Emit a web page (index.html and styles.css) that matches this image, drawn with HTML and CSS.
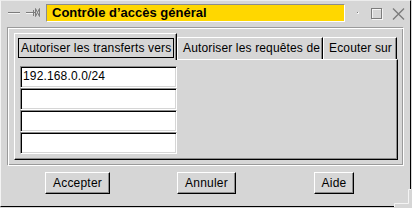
FILE: index.html
```html
<!DOCTYPE html>
<html lang="fr">
<head>
<meta charset="utf-8">
<title>Contrôle d’accès général</title>
<link rel="stylesheet" href="styles.css">
</head>
<body>
<div class="window">
  <div class="titlebar">
    <svg class="ticons-left" width="34" height="17" viewBox="0 0 34 17">
      <rect x="0" y="8" width="12" height="1" fill="#7c7c7c"/>
      <rect x="0" y="9" width="12" height="1" fill="#f4f4f4"/>
      <rect x="18" y="8" width="7" height="1" fill="#7c7c7c"/>
      <rect x="18" y="9" width="7" height="1" fill="#f4f4f4"/>
      <rect x="25" y="6" width="1" height="6" fill="#7c7c7c"/>
      <path d="M26 8.5 H27.5 M27.5 4.5 V12.5 M31.5 4.5 V12.5 M27.5 4.5 L29.5 8.5 L31.5 4.5 M27.5 12.5 L29.5 8.5 L31.5 12.5" fill="none" stroke="#7c7c7c" stroke-width="1"/>
    </svg>
    <div class="title">Contrôle d’accès général</div>
    <svg class="ticons-right" width="64" height="17" viewBox="0 0 64 17">
      <rect x="12" y="8" width="2" height="2" fill="#f4f4f4"/>
      <rect x="12" y="8" width="1" height="1" fill="#7c7c7c"/>
      <rect x="27.5" y="5.5" width="10" height="10" fill="none" stroke="#f4f4f4"/>
      <rect x="26.5" y="4.5" width="10" height="10" fill="none" stroke="#7c7c7c"/>
      <path d="M48 4.5 L59 15.5 M59 4.5 L48 15.5" fill="none" stroke="#7c7c7c" stroke-width="1.4"/>
    </svg>
  </div>

  <div class="frame">
    <div class="notebook">
      <div class="tabs">
        <div class="tab active"><span class="focus">Autoriser les transferts vers</span></div>
        <div class="tab t2"><span class="label">Autoriser les requêtes de</span></div>
        <div class="tab t3"><span class="label">Ecouter sur</span></div>
      </div>
      <div class="panel">
        <div class="entry">192.168.0.0/24</div>
        <div class="entry"></div>
        <div class="entry"></div>
        <div class="entry"></div>
      </div>
    </div>
  </div>

  <div class="buttons">
    <button class="btn b-accept">Accepter</button>
    <button class="btn b-cancel">Annuler</button>
    <button class="btn b-help">Aide</button>
  </div>

  <svg class="grip" width="18" height="19" viewBox="0 0 18 19">
    <rect x="0" y="0" width="18" height="19" fill="#d6d6d6"/>
    <path d="M1.5 19 V15.5 H15.5 V1.5 H18" fill="none" stroke="#f4f4f4" stroke-width="1"/>
    <path d="M0 18.5 H1 M17.5 0 V1" fill="none" stroke="#000" stroke-width="1"/>
  </svg>
</div>
</body>
</html>
```

FILE: styles.css
```css
html, body {
  margin: 0;
  padding: 0;
  background: #d6d6d6;
}

body {
  font-family: "Liberation Sans", Arial, sans-serif;
  font-size: 12px;
  letter-spacing: 0.15px;
  color: #000;
}

.window {
  position: relative;
  box-sizing: border-box;
  width: 411px;
  height: 207px;
  border-top: 1px solid #ececec;
  border-left: 1px solid #f4f4f4;
  border-right: 1px solid #000;
  border-bottom: 1px solid #000;
  background: #d6d6d6;
}

/* ---------- title bar ---------- */
.titlebar {
  box-sizing: border-box;
  height: 27px;
  display: flex;
  align-items: flex-start;
  padding: 3px 0 0 7px;
}

.ticons-left {
  display: block;
  flex: none;
  margin-right: 4px;
}

.title {
  flex: none;
  box-sizing: border-box;
  width: 299px;
  height: 18px;
  background: #ffd700;
  border-top: 1px solid #8c8c8c;
  border-left: 1px solid #8c8c8c;
  border-right: 1px solid #fff;
  border-bottom: 1px solid #fff;
  padding-left: 5px;
  font-weight: bold;
  font-size: 13px;
  letter-spacing: 0;
  line-height: 16px;
  white-space: nowrap;
  overflow: hidden;
}

.ticons-right {
  display: block;
  flex: none;
}

/* ---------- etched frame ---------- */
.frame {
  box-sizing: border-box;
  width: 396px;
  height: 138px;
  margin-left: 7px;
  border: 1px solid #fff;
  box-shadow: -1px -1px 0 #9a9a9a, inset -1px -1px 0 #9a9a9a;
  padding: 4px 5px 5px 5px;
}

/* ---------- notebook ---------- */
.notebook {
  display: flex;
  flex-direction: column;
  width: 384px;
  height: 127px;
}

.tabs {
  display: flex;
  align-items: flex-end;
  height: 26px;
  flex: none;
}

.tab {
  box-sizing: border-box;
  flex: none;
  height: 22px;
  border-top: 1px solid #fff;
  border-left: 1px solid #fff;
  border-right: 1px solid #000;
  box-shadow: inset -1px 0 0 #8c8c8c;
  background: #d6d6d6;
  overflow: hidden;
  white-space: nowrap;
}

.tab .label {
  display: block;
  padding-left: 5px;
  line-height: 21px;
  overflow: hidden;
}

.tab.t2 { width: 146px; }
.tab.t3 { width: 74px; }

.tab.active {
  position: relative;
  z-index: 1;
  width: 163px;
  height: 27px;
  margin-bottom: -1px;
  padding: 4px 2px 2px 3px;
}

.tab.active .focus {
  display: block;
  box-sizing: border-box;
  height: 20px;
  border: 1px solid #000;
  padding-left: 2px;
  line-height: 18px;
  overflow: hidden;
}

.panel {
  box-sizing: border-box;
  flex: 1;
  border-top: 1px solid #fff;
  border-left: 1px solid #fff;
  border-right: 1px solid #000;
  border-bottom: 1px solid #000;
  box-shadow: inset -1px -1px 0 #8c8c8c;
  padding: 6px 0 0 5px;
}

.entry {
  box-sizing: border-box;
  width: 157px;
  height: 22px;
  background: #fff;
  border-top: 1px solid #8c8c8c;
  border-left: 1px solid #8c8c8c;
  border-right: 1px solid #fff;
  border-bottom: 1px solid #fff;
  box-shadow: inset 1px 1px 0 #000, inset -1px -1px 0 #d6d6d6;
  padding-left: 2px;
  line-height: 19px;
  white-space: nowrap;
}

/* ---------- buttons ---------- */
.buttons {
  display: flex;
  margin-top: 6px;
  padding-left: 44px;
}

.btn {
  box-sizing: border-box;
  flex: none;
  height: 22px;
  margin: 0;
  padding: 0;
  background: #d6d6d6;
  border-top: 1px solid #fff;
  border-left: 1px solid #fff;
  border-right: 1px solid #000;
  border-bottom: 1px solid #000;
  box-shadow: inset -1px -1px 0 #8c8c8c;
  font-family: "Liberation Sans", Arial, sans-serif;
  font-size: 12px;
  letter-spacing: 0.2px;
  color: #000;
  line-height: 19px;
  text-align: center;
}

.b-accept { width: 65px; }
.b-cancel { width: 59px; margin-left: 67px; }
.b-help { width: 40px; margin-left: 78px; }

/* window resize grip overlaying the frame corner */
.grip {
  position: absolute;
  right: -1px;
  bottom: -1px;
  display: block;
}
```
